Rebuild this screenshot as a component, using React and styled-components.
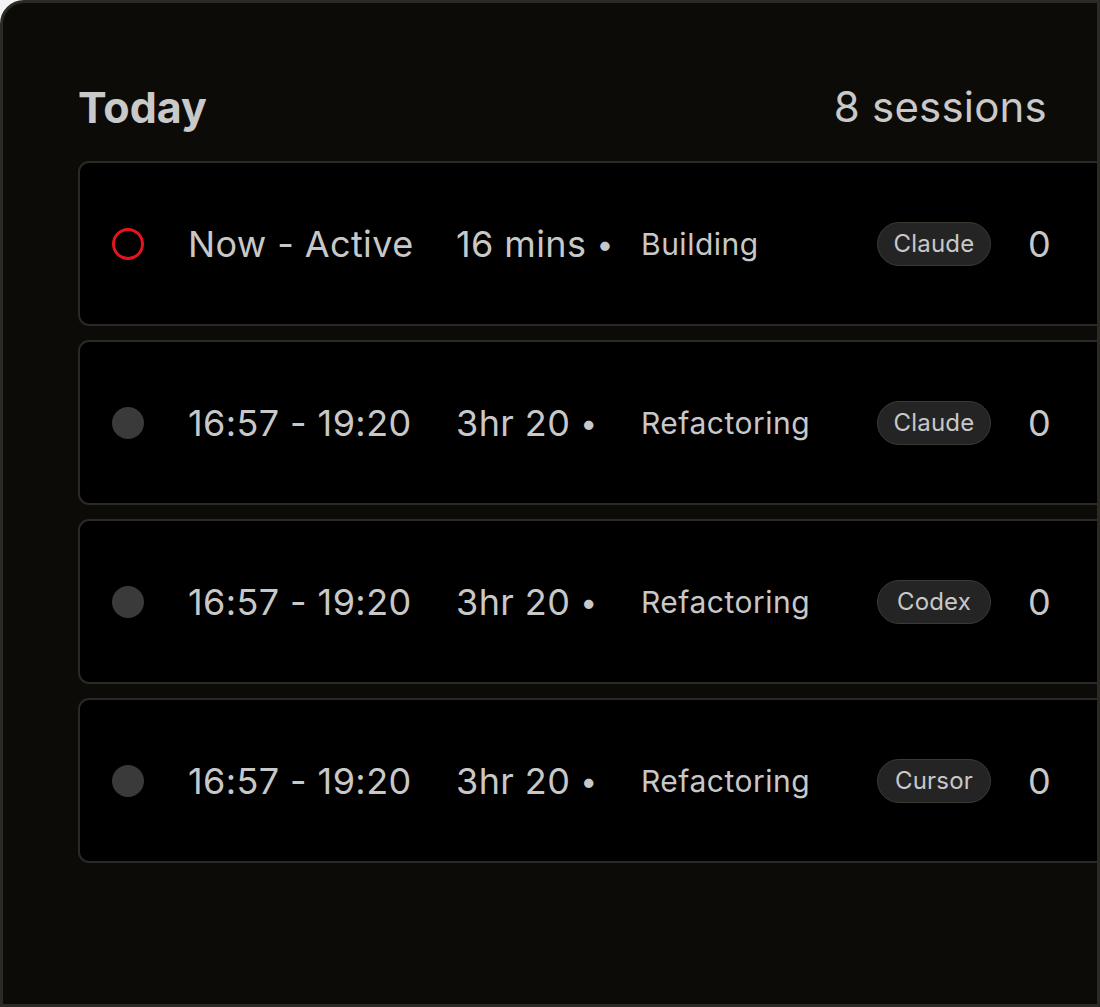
import styled, { createGlobalStyle } from 'styled-components'

const GlobalStyle = createGlobalStyle`
    * {
        box-sizing: border-box;
    }
    body {
        margin: 0;
        background: #f4f4f4;
        font-family: Inter, "Noto Sans", "Liberation Sans", sans-serif;
    }
`

const sessions = [
    { active: true, time: 'Now - Active', duration: '16 mins', task: 'Building', agent: 'Claude', count: 0 },
    { time: '16:57 - 19:20', duration: '3hr 20', task: 'Refactoring', agent: 'Claude', count: 0 },
    { time: '16:57 - 19:20', duration: '3hr 20', task: 'Refactoring', agent: 'Codex', count: 0 },
    { time: '16:57 - 19:20', duration: '3hr 20', task: 'Refactoring', agent: 'Cursor', count: 0 },
]

export default function App() {
    return (
        <>
            <GlobalStyle />
            <Panel>
                <Header>
                    <h2>Today</h2>
                    <span>{sessions.length * 2} sessions</span>
                </Header>
                <List>
                    {sessions.map((s, i) => (
                        <Row key={i}>
                            <Status $active={s.active} />
                            <Time>{s.time}</Time>
                            <Duration>{s.duration}<Bullet>•</Bullet></Duration>
                            <Task>{s.task}</Task>
                            <Chip>{s.agent}</Chip>
                            <Count>{s.count}</Count>
                        </Row>
                    ))}
                </List>
            </Panel>
        </>
    )
}

const Panel = styled.div`
    width: 1100px;
    height: 1007px;
    background: #0c0b08;
    border: 3px solid #2b2a24;
    border-radius: 24px 0 0 0;
    overflow: hidden;
    padding-left: 75px;
    display: flex;
    flex-direction: column;
`

const Header = styled.div`
    display: flex;
    justify-content: space-between;
    align-items: flex-start;
    padding: 80px 50px 0 0;
    height: 155px;
    color: #c9c9c9;

    h2 {
        margin: 0;
        font-size: 43px;
        font-weight: 700;
        line-height: 48px;
    }

    span {
        font-size: 42px;
        line-height: 48px;
        font-weight: 400;
        letter-spacing: 0.2px;
    }
`

const List = styled.div`
    display: flex;
    flex-direction: column;
    gap: 14px;
    width: 1080px;
    margin-top: 3px;
`

const Row = styled.div`
    height: 165px;
    background: #000;
    border: 2px solid #2a2925;
    border-radius: 11px;
    padding-left: 32px;
    display: grid;
    grid-template-columns: 76px 268px 185px 236px 151px auto;
    align-items: center;
    color: #c8c8c8;
    font-size: 36px;
    letter-spacing: 0.4px;
`

const Status = styled.div`
    width: 32px;
    height: 32px;
    border-radius: 50%;
    background: ${p => (p.$active ? 'transparent' : '#3a3a3a')};
    border: ${p => (p.$active ? '3px solid #e3141c' : 'none')};
`

const Time = styled.div`
    white-space: nowrap;
`

const Duration = styled.div`
    white-space: nowrap;
`

const Bullet = styled.span`
    font-size: 30px;
    margin-left: 10px;
    vertical-align: 2px;
`

const Task = styled.div`
    font-size: 30px;
    letter-spacing: 0.5px;
    white-space: nowrap;
`

const Chip = styled.div`
    justify-self: start;
    width: 114px;
    height: 44px;
    display: flex;
    align-items: center;
    justify-content: center;
    border-radius: 22px;
    background: #242424;
    border: 1px solid #3b3a33;
    font-size: 24px;
    letter-spacing: 0.2px;
`

const Count = styled.div`
    font-size: 36px;
`
